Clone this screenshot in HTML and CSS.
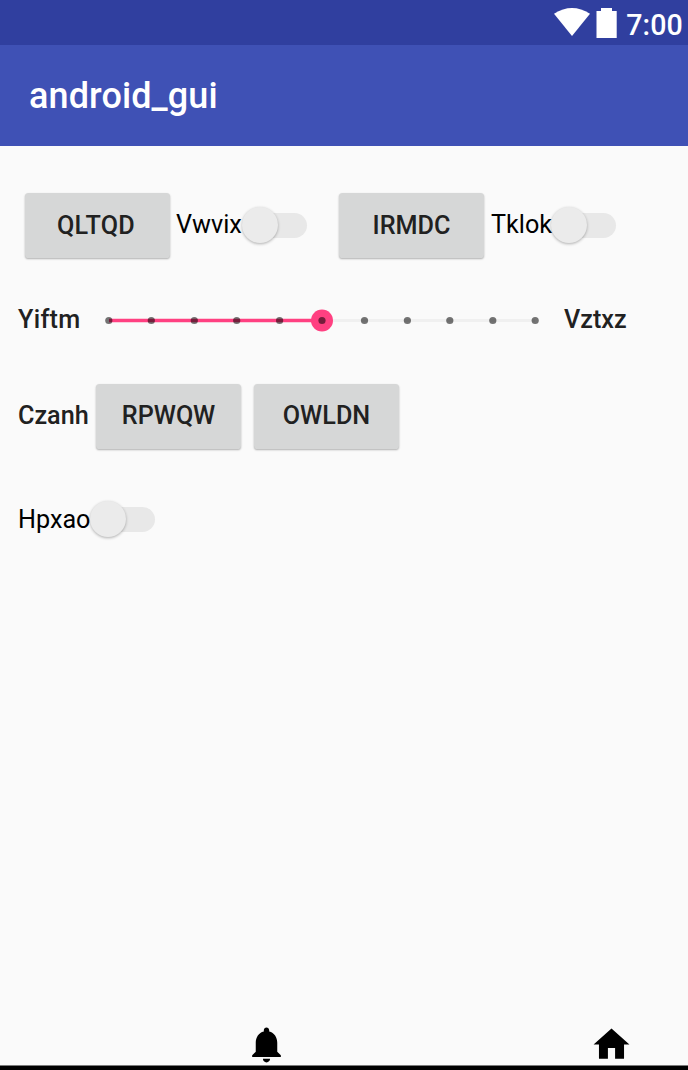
FILE: index.html
```html
<!DOCTYPE html>
<html lang="en">
<head>
<meta charset="utf-8">
<title>android_gui</title>
<link rel="stylesheet" href="styles.css">
</head>
<body>
<div class="screen">
  <div class="status">
    <svg class="wifi" width="38" height="30" viewBox="0 0 38 30"><path d="M1 6.8Q19-4.6 37 6.8L19 29z" fill="#fff"/></svg>
    <svg class="battery" width="21" height="31" viewBox="0 0 21 31"><path d="M.5 4H5V1h11v3h4.7V31H.5z" fill="#fff"/></svg>
    <span class="time">7:00</span>
  </div>
  <header class="appbar"><h1 class="title">android_gui</h1></header>
  <main class="content">
    <div class="row row-top">
      <button class="btn btn-wide">QLTQD</button>
      <label class="toggle toggle-first"><span>Vwvix</span><i class="switch"></i></label>
      <button class="btn">IRMDC</button>
      <label class="toggle toggle-second"><span>Tklok</span><i class="switch"></i></label>
    </div>
    <div class="row row-slider">
      <span class="label label-start">Yiftm</span>
      <svg class="slider" width="434" height="24" viewBox="0 0 434 24">
        <path d="M4 11.5H430" stroke="#f0f0f0" stroke-width="3"/>
        <path d="M4 11.5H217" stroke="#ff4081" stroke-width="3.6"/>
        <circle cx="217" cy="11.5" r="11" fill="#ff4081"/>
        <g fill="#000" fill-opacity=".54">
          <circle cx="3.8" cy="11.5" r="3.6"/><circle cx="46.3" cy="11.5" r="3.6"/><circle cx="89.3" cy="11.5" r="3.6"/><circle cx="131.7" cy="11.5" r="3.6"/><circle cx="174.6" cy="11.5" r="3.6"/><circle cx="217" cy="11.5" r="3.6"/><circle cx="259.5" cy="11.5" r="3.6"/><circle cx="302.4" cy="11.5" r="3.6"/><circle cx="344.8" cy="11.5" r="3.6"/><circle cx="387.8" cy="11.5" r="3.6"/><circle cx="430.2" cy="11.5" r="3.6"/>
        </g>
      </svg>
      <span class="label">Vztxz</span>
    </div>
    <div class="row row-buttons">
      <span class="label label-buttons">Czanh</span>
      <button class="btn">RPWQW</button>
      <button class="btn">OWLDN</button>
    </div>
    <div class="row row-toggle">
      <label class="toggle toggle-last"><span>Hpxao</span><i class="switch"></i></label>
    </div>
  </main>
  <nav class="tabs">
    <svg class="icon" viewBox="0 0 24 24"><path d="M12 22c1.1 0 2-.9 2-2h-4c0 1.1.89 2 2 2zm6-6v-5c0-3.07-1.64-5.64-4.5-6.32V4c0-.83-.67-1.5-1.5-1.5s-1.5.67-1.5 1.5v.68C7.63 5.36 6 7.92 6 11v5l-2 2v1h16v-1l-2-2z"/></svg>
    <svg class="icon" viewBox="0 0 24 24"><path d="M10 20v-6h4v6h5v-8h3L12 3 2 12h3v8z"/></svg>
  </nav>
</div>
</body>
</html>
```
FILE: styles.css
```css
* { box-sizing: border-box; }
body { margin: 0; background: #fafafa; font-family: Roboto, sans-serif; font-size: 25.2px; line-height: 30px; }
.screen { display: flex; flex-direction: column; width: 688px; height: 1070px; overflow: hidden; box-shadow: inset 0 -4px #000, inset 0 -5px #7a7a7a; }
.status { display: flex; justify-content: flex-end; flex: none; height: 45px; padding: 7px 5px 0 0; background: #303f9f; color: #fff; }
.wifi { margin-right: 5px; }
.battery { margin-right: 9px; }
.time { width: 57px; padding-top: 2px; font-size: 28.6px; font-weight: 500; line-height: 32px; text-align: center; }
.appbar { display: flex; align-items: center; flex: none; height: 101px; padding-left: 29px; background: #3f51b5; }
.title { margin: 0; color: #fff; font-size: 36px; font-weight: 500; line-height: 42px; letter-spacing: .1px; }
.content { flex: 1; padding-top: 47px; }
.row { display: flex; align-items: center; white-space: nowrap; }
.row-top { height: 65px; padding-left: 25px; }
.row-slider { height: 30px; margin-top: 47px; padding-left: 18px; }
.row-buttons { height: 65px; margin-top: 48.5px; padding-left: 18px; }
.row-toggle { height: 40px; margin-top: 50.5px; padding-left: 18px; }
.btn { flex: none; width: 145px; height: 65px; padding: 0; border: 0; border-radius: 3.6px; background: #d6d7d7; box-shadow: 0 1px 2px rgba(0, 0, 0, .3); color: #212121; font: 500 25.2px/30px Roboto, sans-serif; }
.btn-wide { padding-right: 3px; letter-spacing: .3px; }
.btn + .btn { margin-left: 13px; }
.label { color: #212121; font-weight: 500; }
.label-start { width: 87px; letter-spacing: .3px; }
.label-buttons { width: 78px; padding-bottom: 1px; }
.slider { flex: none; margin: 2px 25px 0 0; }
.toggle { display: flex; align-items: center; justify-content: space-between; color: #000; }
.toggle-first { width: 131px; margin: 0 32px 0 6px; }
.toggle-second { width: 125px; margin-left: 7px; }
.toggle-first span, .toggle-second span { padding-bottom: 2px; }
.toggle-last { width: 137px; }
.toggle-last span { padding-top: 1px; }
.switch { position: relative; flex: none; width: 53px; height: 25px; border-radius: 13px; background: #e8e8e8; }
.switch::before { content: ""; position: absolute; left: -12px; top: -6px; width: 36px; height: 36px; border-radius: 50%; background: #ebebeb; box-shadow: 0 1px 3px rgba(0, 0, 0, .3); }
.tabs { display: flex; flex: none; justify-content: space-between; height: 48px; padding: 0 55px 0 245px; }
.icon { width: 43px; height: 43px; margin-top: 1px; }
```
